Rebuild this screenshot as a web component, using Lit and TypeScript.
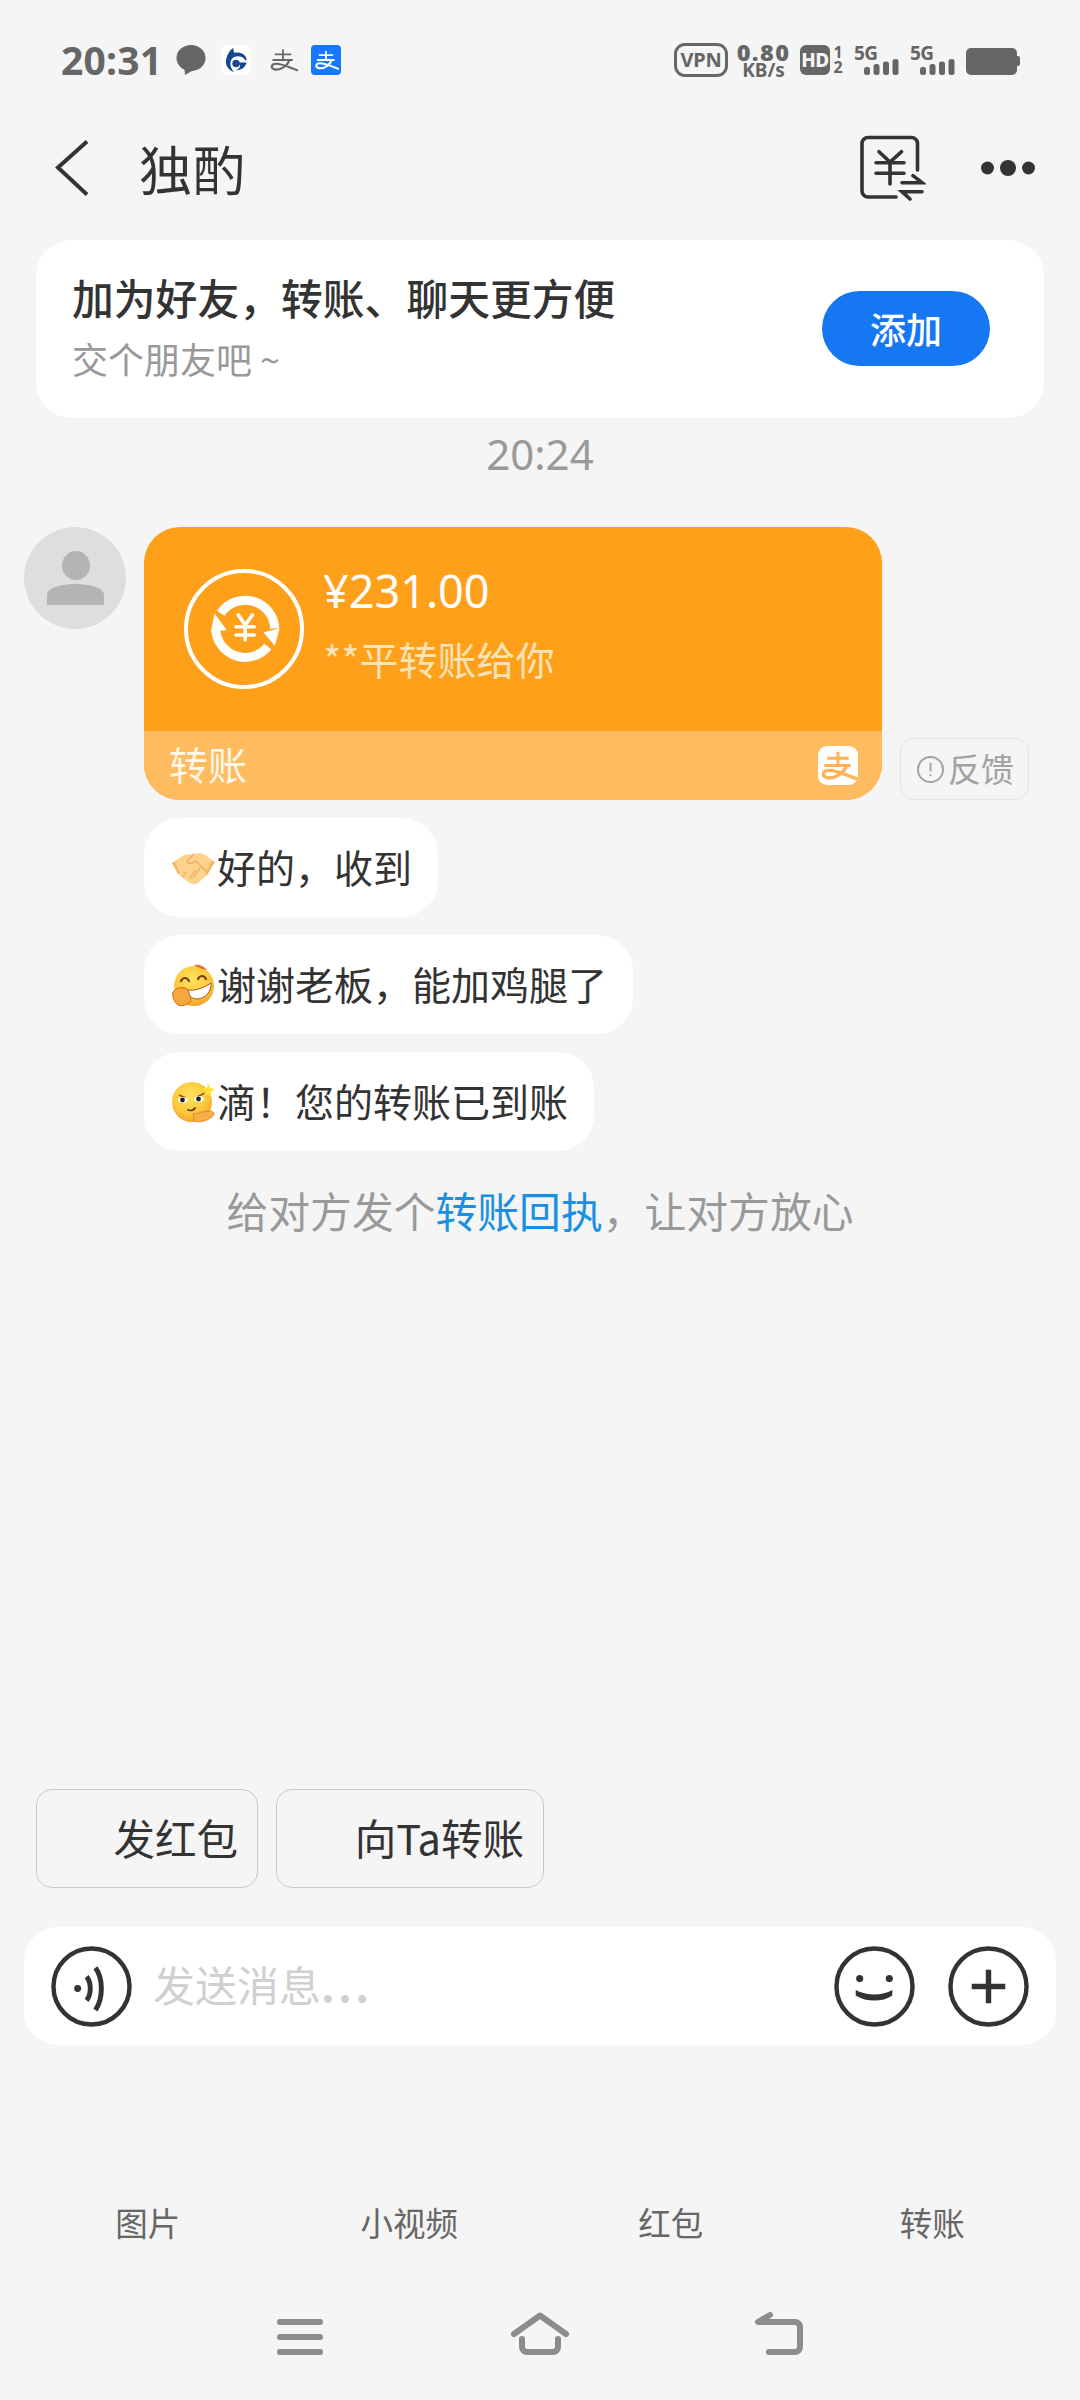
import { LitElement, html, css } from "lit";
import { customElement } from "lit/decorators.js";

const alipay = (cls: string, fg: string, sw = 3) => html`<svg class=${cls} viewBox="0 0 40 40" fill="none" stroke=${fg} stroke-width=${sw}>
  <path d="M9 12.5H31M20 6V20M6 20H33" stroke-width=${sw - 0.4} />
  <path d="M29 20C25 29 16 34 9 32.5C3 31 4 25 11 25C19 25 29 30 40 34" />
</svg>`;

const signal = (updown: boolean) => html`<svg viewBox="0 0 46 16" fill="#666">
  ${updown ? html`<path d="M0 6.5L4 1L8 6.5ZM0 10L8 10L4 15.5Z" />` : ""}
  <rect x="10" y="8" width="6" height="8" rx="2.5" /><rect x="19.5" y="5" width="6" height="11" rx="2.5" />
  <rect x="29" y="2.5" width="6" height="13.5" rx="2.5" /><rect x="38.5" y="0" width="6" height="16" rx="2.5" />
</svg>`;

const faceDefs = html`<svg class="defs" width="0" height="0"><defs>
  <radialGradient id="fg" cx="45%" cy="35%" r="70%"><stop offset="0" stop-color="#ffe45c" /><stop offset="0.65" stop-color="#fcc53a" /><stop offset="1" stop-color="#f59a23" /></radialGradient>
</defs></svg>`;

@customElement("app-root")
export class AppRoot extends LitElement {
  static styles = css`
    :host { display: block; width: 1080px; height: 2400px; background: #f5f5f5; color: #333;
      font-family: "Noto Sans CJK SC", "Noto Sans", sans-serif; overflow: hidden; }
    .page { display: flex; flex-direction: column; height: 2400px; }
    .defs { position: absolute; }

    .status { height: 100px; padding: 20px 60px 0 61px; box-sizing: border-box; display: flex; align-items: center; color: #666; justify-content: space-between; }
    .sleft, .sright { display: flex; align-items: center; }
    .time { font: 700 39px/44px "Noto Sans", sans-serif; width: 100px; letter-spacing: 0.2px; margin-right: 15px; }
    .i-chat { width: 30px; height: 30px; margin-right: 15px; }
    .i-bank { width: 30px; height: 30px; margin-right: 17px; }
    .i-ali-g { width: 30px; height: 30px; margin-right: 13px; }
    .blue { width: 30px; height: 30px; background: #1677ff; border-radius: 4px; display: flex; align-items: center; justify-content: center; }
    .i-ali-w { width: 26px; height: 26px; }
    .vpn { width: 54px; height: 34px; box-sizing: border-box; border: 3px solid #666; border-radius: 11px; font: 700 20px/28px "Noto Sans", sans-serif; text-align: center; letter-spacing: -0.3px; margin-right: 10px; }
    .speed { width: 51px; display: flex; flex-direction: column; align-items: center; font-family: "Noto Sans", sans-serif; font-weight: 700; margin-right: 11px; }
    .speed b { font-size: 23.5px; line-height: 20px; letter-spacing: 1.4px; }
    .speed span { font-size: 19px; line-height: 16px; }
    .hd { width: 30px; height: 30px; background: #666; color: #f5f5f5; border-radius: 6px; font: 800 19px/30px "Noto Sans", sans-serif; text-align: center; letter-spacing: -0.5px; }
    .sim { display: flex; flex-direction: column; width: 12px; margin: 0 10px 0 2px; font: 700 16px/15px "Noto Sans", sans-serif; align-items: center; }
    .net { width: 46px; height: 30px; position: relative; font: 700 19px/16px "Noto Sans", sans-serif; letter-spacing: -0.6px; margin-right: 10px; flex: none; }
    .net svg { position: absolute; left: 0; bottom: 0; width: 46px; height: 16px; }
    .batt { width: 51px; height: 27px; background: #666; border-radius: 5px; position: relative; margin-right: 3px; margin-top: 3px; }
    .batt::after { content: ""; position: absolute; right: -3px; top: 8px; width: 3px; height: 10px; background: #666; border-radius: 0 2px 2px 0; }

    .nav { height: 136px; display: flex; align-items: center; padding: 0 45px 0 55px; }
    .i-back { width: 33px; height: 56px; }
    .title { font-size: 53px; line-height: 70px; margin-left: 51px; flex: 1; letter-spacing: 0.5px; }
    .i-receipt { width: 68px; height: 68px; margin-right: 55px; }
    .i-dots { width: 54px; height: 16px; }

    .card { margin: 4px 36px 0; height: 178px; background: #fff; border-radius: 36px; box-sizing: border-box; padding: 0 54px 0 36px; display: flex; align-items: center; justify-content: space-between; }
    .card-text { margin-top: -6px; }
    .card-t { font-size: 41.8px; line-height: 56px; font-weight: 500; }
    .card-s { font-size: 36px; line-height: 50px; color: #999; margin-top: 8px; }
    .add { width: 168px; height: 75px; border-radius: 38px; background: #1677f2; color: #fff; font-size: 36px; font-weight: 500; line-height: 75px; text-align: center; margin-top: -2px; }

    .ts { height: 74px; line-height: 72px; font-family: "Noto Sans", sans-serif; text-align: center; font-size: 42px; color: #999; }

    .row { display: flex; align-items: flex-end; margin: 35px 0 0 24px; }
    .avatar { width: 102px; height: 102px; border-radius: 50%; background: #dedede; align-self: flex-start; margin-right: 18px; display: flex; align-items: center; justify-content: center; }
    .i-person { width: 57px; height: 54px; }
    .pay { width: 738px; height: 273px; border-radius: 36px; overflow: hidden; background: #ffa01a; display: flex; flex-direction: column; }
    .pay-top { flex: 1; display: flex; align-items: center; padding-left: 38px; }
    .i-trans { width: 124px; height: 124px; margin-right: 17px; }
    .pay-text { display: flex; flex-direction: column; margin-top: -12px; }
    .amount { font-family: "Noto Sans", sans-serif; font-size: 45px; line-height: 60px; color: #fff; }
    .from { font-size: 39px; line-height: 54px; color: #fbe3b8; margin-top: 10px; }
    .pay-band { height: 69px; background: #ffbb5f; display: flex; align-items: center; justify-content: space-between; padding: 0 24px 0 25px; color: #fff8ea; font-size: 39px; }
    .pay-band span { margin-top: -6px; }
    .ali-o { width: 40px; height: 39px; background: #fff; border-radius: 9px; overflow: hidden; }
    .i-ali-o { width: 40px; height: 39px; display: block; }
    .fb { width: 129px; height: 62px; box-sizing: border-box; margin-left: 18px; border: 1px solid #e4e4e4; border-radius: 14px; display: flex; align-items: center; padding-left: 15px; font-size: 33px; color: #a2a2a2; gap: 3px; }
    .fb span { margin-top: -2px; }
    .i-info { width: 29px; height: 29px; }

    .bubbles { margin: 18px 0 0 144px; display: flex; flex-direction: column; align-items: flex-start; gap: 18px; }
    .bubble { height: 99px; box-sizing: border-box; background: #fff; border-radius: 36px; display: flex; align-items: center; padding: 0 26px 4px 28px; font-size: 39px; color: #333; }
    .emoji { width: 43px; height: 43px; flex: none; margin-top: 6px; margin-right: 2px; }

    .hint { margin-top: 29px; font-size: 41.8px; line-height: 60px; text-align: center; color: #999; }
    .hint span { color: #1a8fe3; }
    .spacer { flex: 1; }

    .quick { display: flex; gap: 18px; padding-left: 36px; }
    .qbtn { height: 99px; box-sizing: border-box; border: 1px solid #c9c9c9; border-radius: 16px; font-size: 41.5px; color: #333; display: flex; align-items: center; justify-content: flex-end; padding: 0 19px 3px 0; }
    .q1 { width: 222px; }
    .q2 { width: 268px; }
    .input { margin: 39px 24px 0; height: 118px; background: #fff; border-radius: 34px; display: flex; align-items: center; padding: 0 27px; }
    .ico { width: 81px; height: 81px; flex: none; }
    .ph { flex: 1; font-size: 42px; color: #d0d0d0; margin: -5px 0 0 21px; }
    .ph span { letter-spacing: 3.5px; font-weight: 700; }
    .ico.smile { margin-right: 33px; }

    .tabs { display: grid; grid-template-columns: repeat(4, 261.5px); margin: 147px 0 0 17px; height: 60px; }
    .tabs div { text-align: center; font-size: 32.5px; line-height: 60px; color: #666; }
    .sys { height: 148px; box-sizing: border-box; padding-top: 60px; display: flex; justify-content: center; }
    .sys div { width: 240px; height: 43px; display: flex; justify-content: center; align-items: flex-end; }
    .i-menu { width: 46px; height: 36px; }
    .i-home { width: 60px; height: 43px; }
    .i-ret { width: 50px; height: 43px; }
  `;

  render() {
    return html`<div class="page">
      ${faceDefs}
      <div class="status">
        <div class="sleft">
          <div class="time">20:31</div>
          <svg class="i-chat" viewBox="0 0 30 31" fill="#666"><ellipse cx="15" cy="13.5" rx="15" ry="13.5" /><path d="M8 24L9 31L17 26Z" /></svg>
          <svg class="i-bank" viewBox="0 0 30 31"><rect width="30" height="31" rx="5" fill="#fff" />
            <path d="M12 3L13 8C19 7 25 9 26 15C26 16 25 16 25 16C22 11 15 10 11 14C8 18 9 24 13 28C7 26 3 20 5 14C6 9 9 5 12 3Z" fill="#17488f" />
            <circle cx="15" cy="19" r="3.8" fill="#17488f" /><path d="M17 18H26C24 25 18 26 15 26C20 24 20 21 17 18Z" fill="#17488f" /></svg>
          ${alipay("i-ali-g", "#666", 2.8)}
          <div class="blue">${alipay("i-ali-w", "#fff", 3.2)}</div>
        </div>
        <div class="sright">
          <div class="vpn">VPN</div>
          <div class="speed"><b>0.80</b><span>KB/s</span></div>
          <div class="hd">HD</div>
          <div class="sim"><span>1</span><span>2</span></div>
          <div class="net">5G${signal(true)}</div>
          <div class="net">5G${signal(false)}</div>
          <div class="batt"></div>
        </div>
      </div>

      <div class="nav">
        <svg class="i-back" viewBox="0 0 33 56" fill="none" stroke="#333" stroke-width="4"><path d="M32 1.5L3 27.5L32 54.5" /></svg>
        <div class="title">独酌</div>
        <svg class="i-receipt" viewBox="0 0 68 68" fill="none" stroke="#333" stroke-width="3.6" stroke-linecap="round">
          <path d="M59.5 36V9.5a6 6 0 0 0-6-6H10a6 6 0 0 0-6 6V57a6 6 0 0 0 6 6H38" />
          <path d="M21 17.7L32 28L43.6 17.7M18 28.7H46M18 39.3H46M32 28.7V50" />
          <path d="M44 48.7H64L55 41.7M64 57.7H44L52 65" />
        </svg>
        <svg class="i-dots" viewBox="0 0 54 16" fill="#333"><circle cx="6.5" cy="8" r="6.5" /><circle cx="27" cy="8" r="8" /><circle cx="47.5" cy="8" r="6.5" /></svg>
      </div>

      <div class="card">
        <div class="card-text">
          <div class="card-t">加为好友&#xFF0C;转账、聊天更方便</div>
          <div class="card-s">交个朋友吧 ~</div>
        </div>
        <div class="add">添加</div>
      </div>

      <div class="ts">20:24</div>

      <div class="row">
        <div class="avatar">
          <svg class="i-person" viewBox="0 0 57 54" fill="#b4b4b4"><ellipse cx="29" cy="14.5" rx="14" ry="14.5" /><path d="M0 54V44C0 37 13 33 28.5 33S57 37 57 44V54Z" /></svg>
        </div>
        <div class="pay">
          <div class="pay-top">
            <svg class="i-trans" viewBox="0 0 124 124" fill="none" stroke="#fff">
              <circle cx="62" cy="62" r="58" stroke-width="4" />
              <path d="M38.7 46.3A29.5 29.5 0 0 1 92.7 61.5M85.9 79.7A29.5 29.5 0 0 1 33.7 61.5" stroke-width="9" />
              <path d="M81.4 65.3L97.6 61.3L92.8 78.7ZM32.5 46.3L29 64.7L44.6 63Z" fill="#fff" stroke="none" />
              <path d="M56.3 48L63.2 58L70.4 48M54 59.7H72.2M54 68H72.2M63.2 59V73" stroke-width="3.6" stroke-linecap="round" />
            </svg>
            <div class="pay-text">
              <div class="amount">¥231.00</div>
              <div class="from">**平转账给你</div>
            </div>
          </div>
          <div class="pay-band">
            <span>转账</span>
            <div class="ali-o">${alipay("i-ali-o", "#ffb257", 3.4)}</div>
          </div>
        </div>
        <div class="fb">
          <svg class="i-info" viewBox="0 0 30 30" fill="none" stroke="#a2a2a2" stroke-width="2"><circle cx="15" cy="15" r="13" /><path d="M15 8V17M15 20V22" /></svg>
          <span>反馈</span>
        </div>
      </div>

      <div class="bubbles">
        <div class="bubble">
          <svg class="emoji" viewBox="0 0 43 43">
            <path d="M0 16L12 8C15 7 19 8 22 7C26 6 30 6 33 8L43 15L35 28L26 36C23 38 19 37 16 35L6 27Z" fill="#fdd28c" />
            <path d="M22 7L15 14C15 17 19 17 22 15L24 14L36 26M28 21L21 31M24 23L17 32M14 25L11 30" fill="none" stroke="#eba95c" stroke-width="1.2" />
            <path d="M0 16L6 27L8 26L3 15ZM43 15L35 28L33 27L40 14Z" fill="#f6b765" />
          </svg>
          好的&#xFF0C;收到
        </div>
        <div class="bubble">
          <svg class="emoji" viewBox="0 0 43 43">
            <circle cx="22" cy="22" r="20" fill="url(#fg)" />
            <path d="M22 1C27 0 32 2 35 6L30 5C27 3 24 3 22 1Z" fill="#ef6a2d" />
            <path d="M9 17C11 13 15 13 17 17M26 15C28 11 32 11 34 15" fill="none" stroke="#7a3c10" stroke-width="2.2" stroke-linecap="round" />
            <path d="M14 26C22 27 30 25 39 19C40 27 33 35 25 35C20 35 16 31 14 26Z" fill="#fff" stroke="#a8581a" stroke-width="1" />
            <path d="M1 28C5 23 12 22 16 26L19 35C19 40 11 43 6 41C2 38 0 33 1 28Z" fill="#f7a83c" stroke="#c76e14" stroke-width="1" />
          </svg>
          谢谢老板&#xFF0C;能加鸡腿了
        </div>
        <div class="bubble">
          <svg class="emoji" viewBox="0 0 43 43">
            <circle cx="20" cy="21" r="20" fill="url(#fg)" />
            <path d="M7 14L14 17M25 16L33 12" stroke="#8a5a1a" stroke-width="1.5" fill="none" />
            <ellipse cx="11" cy="19" rx="5" ry="3" fill="#fff" /><circle cx="10.5" cy="19" r="2.4" fill="#222" />
            <ellipse cx="27" cy="18" rx="5" ry="3" fill="#fff" /><circle cx="26.5" cy="18" r="2.4" fill="#222" />
            <path d="M16 29C19 30 22 29 23 27" stroke="#5b3410" stroke-width="1.8" fill="none" stroke-linecap="round" />
            <path d="M21 33C27 32 33 30 38 30C42 30 43 33 41 35C36 40 28 42 22 40Z" fill="#f7ac44" stroke="#d98723" stroke-width="0.8" />
            <path d="M36 2L38 7L43 8L39 11L39 16L36 13L32 15L33 10L30 7L35 7Z" fill="#ffe033" />
          </svg>
          滴&#xFF01;您的转账已到账
        </div>
      </div>

      <div class="hint">给对方发个<span>转账回执</span>&#xFF0C;让对方放心</div>
      <div class="spacer"></div>

      <div class="quick">
        <div class="qbtn q1">发红包</div>
        <div class="qbtn q2">向Ta转账</div>
      </div>

      <div class="input">
        <svg class="ico" viewBox="0 0 82 82" fill="none" stroke="#333" stroke-width="4.5">
          <circle cx="41" cy="41" r="38.5" />
          <circle cx="27" cy="43" r="3.5" fill="#333" stroke="none" />
          <path d="M36 31C41 37 41 49 36 55" stroke-width="5" />
          <path d="M45 22C53 33 53 53 45 65" stroke-width="5" />
        </svg>
        <div class="ph">发送消息<span>...</span></div>
        <svg class="ico smile" viewBox="0 0 82 82" fill="none" stroke="#333" stroke-width="4.5">
          <circle cx="41" cy="41" r="38.5" />
          <circle cx="26" cy="33" r="3.6" fill="#333" stroke="none" /><circle cx="56" cy="33" r="3.6" fill="#333" stroke="none" />
          <path d="M22 44.5V50C33 57 49 57 59 50V44.5C49 50.5 33 50.5 22 44.5Z" fill="#333" stroke="none" />
        </svg>
        <svg class="ico" viewBox="0 0 82 82" fill="none" stroke="#333" stroke-width="4.5">
          <circle cx="41" cy="41" r="38.5" />
          <path d="M24 41H58M41 24V58" stroke-width="5.5" />
        </svg>
      </div>

      <div class="tabs"><div>图片</div><div>小视频</div><div>红包</div><div>转账</div></div>

      <div class="sys">
        <div><svg class="i-menu" viewBox="0 0 46 36" stroke="#8c8c8c" stroke-width="6" stroke-linecap="round"><path d="M3 3H43M3 18H43M3 33H43" /></svg></div>
        <div><svg class="i-home" viewBox="0 0 60 43" fill="none" stroke="#8c8c8c" stroke-width="6" stroke-linecap="round" stroke-linejoin="round"><path d="M4 22L30 3.5L56 22" /><path d="M12 27V35a5 5 0 0 0 5 5H43a5 5 0 0 0 5-5V27" /></svg></div>
        <div><svg class="i-ret" viewBox="0 0 50 43" fill="none" stroke="#8c8c8c" stroke-width="6" stroke-linecap="round" stroke-linejoin="round"><path d="M15 3L3 10H40a5 5 0 0 1 5 5V35a5 5 0 0 1-5 5H14" /></svg></div>
      </div>
    </div>`;
  }
}
